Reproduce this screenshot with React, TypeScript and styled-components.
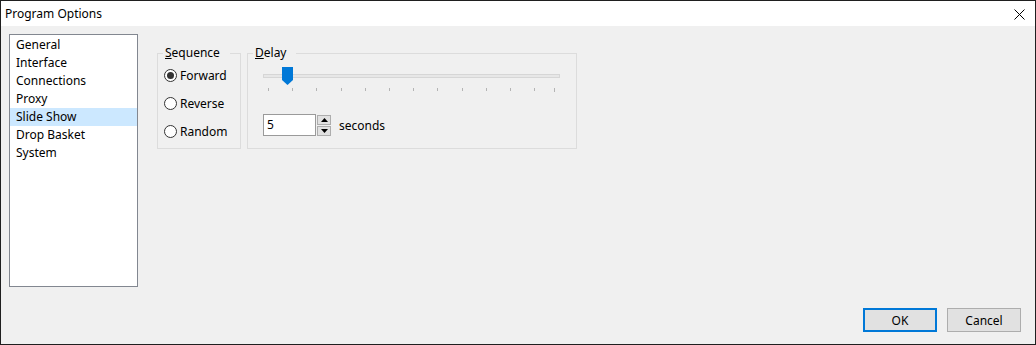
import styled, { createGlobalStyle } from 'styled-components';

const GlobalStyle = createGlobalStyle`
  html, body {
    margin: 0;
    padding: 0;
    background: #f0f0f0;
  }
  body {
    font-family: "Segoe UI", "Noto Sans", "Open Sans", sans-serif;
    font-size: 12px;
    color: #000;
  }
`;

const Window = styled.div`
  box-sizing: border-box;
  width: 1036px;
  height: 345px;
  border: 1px solid #1f1f1f;
  background: #f0f0f0;
  display: flex;
  flex-direction: column;
`;

const TitleBar = styled.div`
  height: 25px;
  background: #fff;
  display: flex;
  align-items: center;
  justify-content: space-between;
  padding-left: 4px;
  padding-right: 10px;
  flex-shrink: 0;
`;

const Title = styled.span`
  font-size: 12px;
  line-height: 16px;
`;

const CloseButton = styled.button`
  border: none;
  background: transparent;
  padding: 0;
  width: 12px;
  height: 12px;
  display: flex;
  align-items: center;
  justify-content: center;
  margin-top: 1px;
`;

const Body = styled.div`
  flex: 1;
  display: flex;
  flex-direction: column;
  padding: 8px 14px 12px 8px;
`;

const Main = styled.div`
  display: flex;
  align-items: flex-start;
`;

const ListBox = styled.ul`
  box-sizing: border-box;
  width: 129px;
  height: 253px;
  margin: 0;
  padding: 1px 0 0;
  list-style: none;
  background: #fff;
  border: 1px solid #828790;
  flex-shrink: 0;
`;

const ListItem = styled.li<{ $selected?: boolean }>`
  height: 18px;
  line-height: 18px;
  padding-left: 6px;
  background: ${(p) => (p.$selected ? '#cce8ff' : 'transparent')};
`;

const Groups = styled.div`
  display: flex;
  gap: 6px;
  margin-left: 19px;
  margin-top: 11px;
`;

const GroupBox = styled.fieldset<{ $width: number }>`
  box-sizing: border-box;
  width: ${(p) => p.$width}px;
  height: 104px;
  margin: 0;
  padding: 0;
  border: 1px solid #dcdcdc;
  min-inline-size: 0;
`;

const Caption = styled.legend`
  margin-left: 5px;
  padding: 0 10px 0 2px;
  line-height: 16px;
  font-size: 12px;
`;

const RadioList = styled.div`
  display: flex;
  flex-direction: column;
  gap: 14px;
  padding: 7px 0 0 6px;
`;

const RadioRow = styled.label`
  display: flex;
  align-items: center;
  height: 14px;
  gap: 3px;
`;

const RadioCircle = styled.span<{ $checked?: boolean }>`
  box-sizing: border-box;
  width: 13px;
  height: 13px;
  border-radius: 50%;
  border: 1px solid #333;
  background: #fff;
  display: flex;
  align-items: center;
  justify-content: center;
  &::after {
    content: '';
    width: 7px;
    height: 7px;
    border-radius: 50%;
    background: ${(p) => (p.$checked ? '#333' : 'transparent')};
  }
`;

const DelayBody = styled.div`
  padding: 6px 0 0 15px;
  display: flex;
  flex-direction: column;
`;

const Slider = styled.div`
  position: relative;
  width: 297px;
  height: 25px;
`;

const Track = styled.div`
  box-sizing: border-box;
  margin-top: 7px;
  height: 4px;
  border: 1px solid #d6d6d6;
  background: #e7e7e7;
`;

const Ticks = styled.div`
  position: relative;
  height: 6px;
  margin-top: 10px;
`;

const Tick = styled.span<{ $long?: boolean }>`
  position: absolute;
  top: 0;
  width: 1px;
  height: ${(p) => (p.$long ? 4 : 3)}px;
  background: #b4b4b4;
`;

const Thumb = styled.svg`
  position: absolute;
  top: 0;
  left: 19px;
`;

const SpinRow = styled.div`
  display: flex;
  align-items: center;
  margin-top: 22px;
`;

const SpinInput = styled.div`
  box-sizing: border-box;
  width: 53px;
  height: 22px;
  background: #fff;
  border: 1px solid #9a9a9a;
  padding-left: 3px;
  line-height: 20px;
`;

const SpinButtons = styled.div`
  display: flex;
  flex-direction: column;
  gap: 1px;
  margin-left: 1px;
`;

const SpinButton = styled.div`
  box-sizing: border-box;
  width: 14px;
  height: 10px;
  border: 1px solid #adadad;
  background: #e1e1e1;
  display: flex;
  align-items: center;
  justify-content: center;
`;

const Unit = styled.span`
  margin-left: 8px;
`;

const Footer = styled.div`
  margin-top: auto;
  display: flex;
  justify-content: flex-end;
  gap: 10px;
`;

const DialogButton = styled.button<{ $default?: boolean }>`
  box-sizing: border-box;
  width: 74px;
  height: 24px;
  font-family: inherit;
  font-size: 12px;
  color: #000;
  background: #e1e1e1;
  border: ${(p) => (p.$default ? '2px solid #0078d7' : '1px solid #adadad')};
  padding: 0;
`;

const pages = ['General', 'Interface', 'Connections', 'Proxy', 'Slide Show', 'Drop Basket', 'System'];
const tickXs = [...Array.from({ length: 12 }, (_, i) => Math.round(5 + i * 24.2)), 291];

export default function App() {
  return (
    <>
      <GlobalStyle />
      <Window>
        <TitleBar>
          <Title>Program Options</Title>
          <CloseButton aria-label="Close">
            <svg width="11" height="11" viewBox="0 0 11 11">
              <path d="M0.5 0.5 L10.5 10.5 M10.5 0.5 L0.5 10.5" stroke="#000" strokeWidth="1" />
            </svg>
          </CloseButton>
        </TitleBar>
        <Body>
          <Main>
            <ListBox>
              {pages.map((p) => (
                <ListItem key={p} $selected={p === 'Slide Show'}>
                  {p}
                </ListItem>
              ))}
            </ListBox>
            <Groups>
              <GroupBox $width={84}>
                <Caption>
                  <u>S</u>equence
                </Caption>
                <RadioList>
                  <RadioRow>
                    <RadioCircle $checked />
                    Forward
                  </RadioRow>
                  <RadioRow>
                    <RadioCircle />
                    Reverse
                  </RadioRow>
                  <RadioRow>
                    <RadioCircle />
                    Random
                  </RadioRow>
                </RadioList>
              </GroupBox>
              <GroupBox $width={330}>
                <Caption>
                  <u>D</u>elay
                </Caption>
                <DelayBody>
                  <Slider>
                    <Track />
                    <Ticks>
                      {tickXs.map((x, i) => (
                        <Tick key={i} $long={i === tickXs.length - 1} style={{ left: x }} />
                      ))}
                    </Ticks>
                    <Thumb width="11" height="18" viewBox="0 0 11 18">
                      <path d="M0 0 H11 V13 L5.5 18 L0 13 Z" fill="#0078d7" />
                    </Thumb>
                  </Slider>
                  <SpinRow>
                    <SpinInput>5</SpinInput>
                    <SpinButtons>
                      <SpinButton>
                        <svg width="7" height="4" viewBox="0 0 7 4">
                          <path d="M0 4 L3.5 0 L7 4 Z" fill="#000" />
                        </svg>
                      </SpinButton>
                      <SpinButton>
                        <svg width="7" height="4" viewBox="0 0 7 4">
                          <path d="M0 0 L3.5 4 L7 0 Z" fill="#000" />
                        </svg>
                      </SpinButton>
                    </SpinButtons>
                    <Unit>seconds</Unit>
                  </SpinRow>
                </DelayBody>
              </GroupBox>
            </Groups>
          </Main>
          <Footer>
            <DialogButton $default>OK</DialogButton>
            <DialogButton>Cancel</DialogButton>
          </Footer>
        </Body>
      </Window>
    </>
  );
}
